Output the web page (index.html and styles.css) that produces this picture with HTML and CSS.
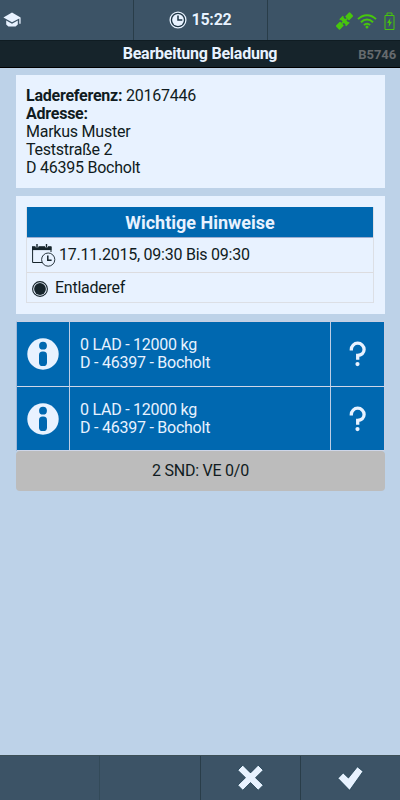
FILE: index.html
```html
<!DOCTYPE html>
<html lang="de">
<head>
<meta charset="utf-8">
<title>Bearbeitung Beladung</title>
<link rel="stylesheet" href="styles.css">
</head>
<body>
<svg width="0" height="0" class="defs">
  <symbol id="info" viewBox="0 0 32 32">
    <circle cx="16" cy="16" r="15.7" fill="#e8f2ff"/>
    <circle cx="16" cy="7.7" r="3.9" fill="#0068b0"/>
    <rect x="12" y="13.6" width="8" height="14.4" rx="3.6" fill="#0068b0"/>
  </symbol>
  <symbol id="question" viewBox="0 0 18 26">
    <path d="M2.3 9.4V8.6a6.4 6.4 0 0 1 12.8 0c0 3.3-2.7 5.6-6.4 5.8v4.4" fill="none" stroke="#e8f2ff" stroke-width="3.3"/>
    <circle cx="8.5" cy="23.1" r="2.1" fill="#e8f2ff"/>
  </symbol>
</svg>
<div class="app">
  <header class="status">
    <div class="status-cell left">
      <svg width="18" height="16" viewBox="0 0 18 16" fill="#e8f2ff"><path d="M9 .5 17.6 5.6v6.2h-1.3V6.5L9 10.3.4 5.6z"/><path d="M3.2 8.5 9 11.7l5.8-3.2v4L12.6 14.6H5.4L3.2 12.5z"/></svg>
    </div>
    <div class="status-cell time">
      <svg width="18" height="18" viewBox="0 0 18 18"><circle cx="9" cy="9" r="7.9" fill="#1c3444" stroke="#e8f2ff" stroke-width="1.3"/><circle cx="9" cy="9" r="5.9" fill="#e8f2ff"/><path d="M9 4.5V9h4.3" fill="none" stroke="#1c3444" stroke-width="1.5"/></svg>
      <span>15:22</span>
    </div>
    <div class="status-cell right">
      <svg class="sat" width="17" height="18" viewBox="0 0 17 18"><g transform="rotate(-45 8.5 9)" fill="#47c60d"><rect x="-1.4" y="6.2" width="6.4" height="5.6" rx=".8"/><rect x="12" y="6.2" width="6.4" height="5.6" rx=".8"/><rect x="5" y="8.1" width="7" height="1.8"/><rect x="6.7" y="4.9" width="3.6" height="8.2"/><path d="M6 12.4h5v1.5H6zM6 4.1h5v1.5H6z"/></g></svg>
      <svg class="wifi" width="20" height="16" viewBox="0 0 20 16" fill="none" stroke="#47c60d" stroke-width="2"><path d="M1 6.1c5.2-5.3 12.8-5.3 18 0M4 9.2c3.5-3.5 8.5-3.5 12 0M6.9 12.1c1.8-1.8 4.4-1.8 6.2 0"/><circle cx="10" cy="14" r="1.5" fill="#47c60d" stroke="none"/></svg>
      <svg class="battery" width="11" height="19" viewBox="0 0 11 19"><path d="M1 3.5h9v14H1zM3 3.3V1h5v2.3" fill="none" stroke="#47c60d" stroke-width="1"/><path d="M6.3 6 3.1 11h2l-.5 4.2 3.4-5.4H6z" fill="#47c60d"/></svg>
    </div>
  </header>
  <div class="titlebar"><h1>Bearbeitung Beladung</h1><span class="code">B5746</span></div>
  <main>
    <section class="card address">
      <b>Ladereferenz:</b> 20167446<br>
      <b>Adresse:</b><br>
      Markus Muster<br>
      Teststraße 2<br>
      D 46395 Bocholt
    </section>
    <section class="card notes">
      <div class="notes-table">
        <h2>Wichtige Hinweise</h2>
        <div class="note date">
          <svg width="24" height="23" viewBox="0 0 24 23" fill="none" stroke="#16242b"><path d="M.6 3v15.5H11M19 3v5" stroke-width="1"/><path d="M0 2.2h19.5v3.9H0z" fill="#16242b" stroke="none"/><path d="M5 0v3.2M14.5 0v3.2" stroke="#e8f2ff" stroke-width="3"/><path d="M5 0v3M14.5 0v3" stroke-width="1.4"/><circle cx="16.2" cy="15.6" r="6.6" fill="#e8f2ff" stroke-width=".9"/><path d="M15.8 11.6v4.6h3.8" stroke-width="1.5"/></svg>
          <span>17.11.2015, 09:30 Bis 09:30</span>
        </div>
        <div class="note ref">
          <svg width="16" height="16" viewBox="0 0 16 16"><circle cx="8" cy="8" r="7.4" fill="none" stroke="#16242b" stroke-width="1.1"/><circle cx="8" cy="8" r="5.9" fill="#16242b"/></svg>
          <span>Entladeref</span>
        </div>
      </div>
    </section>
    <section class="stops">
      <div class="stop">
        <div class="cell"><svg width="32" height="32"><use href="#info"/></svg></div>
        <div class="cell text">0 LAD - 12000 kg<br>D - 46397 - Bocholt</div>
        <div class="cell"><svg width="18" height="26"><use href="#question"/></svg></div>
      </div>
      <div class="stop">
        <div class="cell"><svg width="32" height="32"><use href="#info"/></svg></div>
        <div class="cell text">0 LAD - 12000 kg<br>D - 46397 - Bocholt</div>
        <div class="cell"><svg width="18" height="26"><use href="#question"/></svg></div>
      </div>
    </section>
    <div class="summary">2 SND: VE 0/0</div>
  </main>
  <footer>
    <div class="action soft"></div>
    <div class="action"></div>
    <div class="action"><svg width="28" height="28" viewBox="0 0 28 28"><path d="M5.8 1.2 13.5 8.9 21.2 1.2 26.2 6.2 18.5 13.7l7.7 7.5-5 5L13.5 18.5 5.8 26.2.8 21.2 8.5 13.7.8 6.2z" fill="#e8f2ff" stroke="#1d3e50" stroke-width=".8"/></svg></div>
    <div class="action"><svg width="28" height="28" viewBox="0 0 28 28"><path d="M1 14.3 6.2 9 11.4 14 20.4 2.8 26 7.4 12.6 26.3z" fill="#e8f2ff" stroke="#1d3e50" stroke-width=".8"/></svg></div>
  </footer>
</div>
</body>
</html>
```

FILE: styles.css
```css
* { box-sizing: border-box; }
body {
  margin: 0;
  font: 16px/18px Roboto, sans-serif;
  letter-spacing: -0.24px;
  color: #101b21;
  background: #bdd2e8;
}
svg { display: block; flex: none; }
.defs { display: none; }
.app { height: 800px; display: flex; flex-direction: column; }
.status {
  height: 40px;
  display: grid;
  grid-template-columns: 134px 134px 132px;
  background: #3c5366;
}
.status-cell { display: flex; align-items: center; border-right: 1px solid #293d49; }
.status-cell:last-child { border-right: 0; }
.left { padding-left: 3px; }
.time {
  justify-content: center;
  gap: 4px;
  color: #e8f2ff;
  font-weight: 700;
  text-shadow: 0 0 1px #1c3444;
}
.right { justify-content: flex-end; padding: 2px 5px 0 0; }
.sat { margin-right: 4px; }
.wifi { margin-right: 7px; }
.titlebar {
  height: 28px;
  display: grid;
  grid-template-columns: 1fr auto 1fr;
  align-items: center;
  padding-right: 4px;
  padding-left: 4px;
  background: #16242b;
  border-top: 1px solid #0f1c22;
  border-bottom: 2px solid #000;
  border-bottom-width: 1px;
}
.titlebar h1 {
  grid-column: 2;
  margin: 0;
  color: #e8f2ff;
  font-size: 16px;
  line-height: 18px;
}
.code { text-align: right; font-size: 13px; font-weight: 700; letter-spacing: -0.1px; color: #666b6e; padding-top: 1px; }
main { flex: 1; padding: 7px 15px 0 16px; }
.card { background: #e8f2ff; }
.address { height: 113px; padding: 11.5px 10px; }
.notes { height: 118px; margin-top: 8px; padding: 11px 11px 0 10px; }
.notes-table { height: 96px; border: 1px solid #dcdfe5; border-top: 0; }
.notes-table h2 {
  height: 31px;
  margin: 0;
  background: #0068b0;
  border-bottom: 1px solid #9daed0;
  color: #e8f2ff;
  font-size: 18px;
  line-height: 32px;
  letter-spacing: 0;
  text-align: center;
}
.note { display: flex; align-items: center; }
.date { height: 35px; padding-left: 5px; gap: 3px; border-bottom: 1px solid #dcdcdf; }
.ref { height: 29px; padding-left: 5px; gap: 7px; }
.ref svg { margin-top: 3px; }
.stops { margin-top: 7px; border: 1px solid #c9cfe2; border-width: 1px 1px 0 0; border-left: 1px solid #9fb8d8; }
.stop {
  height: 65px;
  display: grid;
  grid-template-columns: 53px 261px 1fr;
  border-bottom: 1px solid #ced6e8;
  background: #0068b0;
}
.stop:last-child { height: 64px; }
.cell {
  display: flex;
  align-items: center;
  justify-content: center;
  border-right: 2px solid #bccde5;
  border-right-width: 1.5px;
}
.cell:last-child { border-right: 0; }
.cell.text { justify-content: flex-start; padding-left: 10px; color: #e8f2ff; }
.summary {
  height: 40px;
  border-radius: 4px;
  background: #bcbcbc;
  line-height: 40px;
  text-align: center;
}
footer {
  height: 45px;
  display: grid;
  grid-template-columns: 100px 101px 100px 99px;
  background: #3c5366;
  border-top: 1px solid #3d5057;
}
.action {
  display: flex;
  align-items: center;
  justify-content: center;
  border-right: 1px solid #293d49;
}
.soft { border-color: #334a59; }
.action:last-child { border-right: 0; }
```
